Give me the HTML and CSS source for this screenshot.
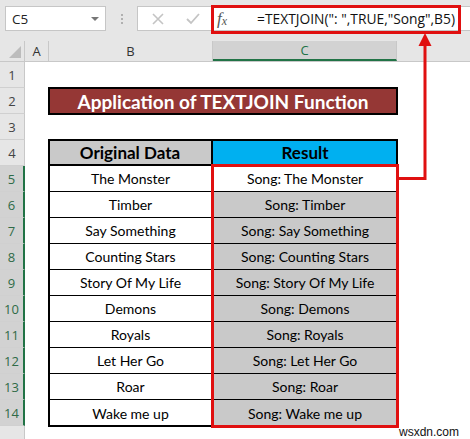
FILE: index.html
```html
<!DOCTYPE html>
<html>
<head>
<meta charset="utf-8">
<link rel="stylesheet" href="styles.css">
</head>
<body>
<div class="app">
  <div class="toolbar">
    <div class="namebox"><span class="nb-text">C5</span><span class="nb-arrow"></span></div>
    <div class="dots"><i></i><i></i><i></i></div>
    <div class="fbar">
      <span class="ficon cancel">
        <svg width="14" height="14" viewBox="0 0 14 14"><path d="M2 2 L12 12 M12 2 L2 12" stroke="#c4c4c4" stroke-width="1.6" fill="none"/></svg>
      </span>
      <span class="ficon enter">
        <svg width="16" height="14" viewBox="0 0 16 14"><path d="M2 7 L6 11 L14 2" stroke="#c4c4c4" stroke-width="1.8" fill="none"/></svg>
      </span>
      <span class="fx">f<sub>x</sub></span>
      <span class="formula">=TEXTJOIN(": ",TRUE,"Song",B5)</span>
    </div>
  </div>

  <div class="colheads">
    <div class="corner"><span class="tri"></span></div>
    <div class="ch ch-a">A</div>
    <div class="ch ch-b">B</div>
    <div class="ch ch-c sel">C</div>
    <div class="ch ch-rest"></div>
  </div>

  <div class="sheet">
    <div class="rowheads">
      <div class="rh">1</div>
      <div class="rh">2</div>
      <div class="rh">3</div>
      <div class="rh">4</div>
      <div class="rh sel">5</div>
      <div class="rh sel">6</div>
      <div class="rh sel">7</div>
      <div class="rh sel">8</div>
      <div class="rh sel">9</div>
      <div class="rh sel">10</div>
      <div class="rh sel">11</div>
      <div class="rh sel">12</div>
      <div class="rh sel">13</div>
      <div class="rh sel">14</div>
      <div class="rh"></div>
    </div>
    <div class="cells">
      <div class="blank"></div>
      <div class="titlerow"><div class="title">Application of TEXTJOIN Function</div></div>
      <div class="blank"></div>
      <div class="table">
        <div class="tr head"><div class="td b">Original Data</div><div class="td c">Result</div></div>
        <div class="tr"><div class="td b">The Monster</div><div class="td c white">Song: The Monster</div></div>
        <div class="tr"><div class="td b">Timber</div><div class="td c">Song: Timber</div></div>
        <div class="tr"><div class="td b">Say Something</div><div class="td c">Song: Say Something</div></div>
        <div class="tr"><div class="td b">Counting Stars</div><div class="td c">Song: Counting Stars</div></div>
        <div class="tr"><div class="td b">Story Of My Life</div><div class="td c">Song: Story Of My Life</div></div>
        <div class="tr"><div class="td b">Demons</div><div class="td c">Song: Demons</div></div>
        <div class="tr"><div class="td b">Royals</div><div class="td c">Song: Royals</div></div>
        <div class="tr"><div class="td b">Let Her Go</div><div class="td c">Song: Let Her Go</div></div>
        <div class="tr"><div class="td b">Roar</div><div class="td c">Song: Roar</div></div>
        <div class="tr last"><div class="td b">Wake me up</div><div class="td c">Song: Wake me up</div></div>
      </div>
    </div>
  </div>

  <div class="redbox formula-box"></div>
  <div class="redbox range-box"></div>
  <svg class="arrow" width="470" height="439" viewBox="0 0 470 439">
    <path d="M398 178.5 H425 V44" stroke="#e01010" stroke-width="3" fill="none"/>
    <path d="M418.5 46 L425 33 L431.5 46 Z" fill="#e01010"/>
  </svg>
  <div class="watermark">wsxdn.com</div>
</div>
</body>
</html>
```

FILE: styles.css
```css
* { box-sizing: border-box; }
html, body { margin: 0; padding: 0; }
body { width: 470px; height: 439px; overflow: hidden; background: #fff; }
.app { position: relative; width: 470px; height: 439px; overflow: hidden; font-family: Lato, "Liberation Sans", sans-serif; }

.toolbar { height: 41px; background: #e6e6e6; display: flex; align-items: flex-start; padding-top: 6px; }
.namebox { margin-left: 5px; width: 101px; height: 25px; background: #fff; border: 1px solid #c6c6c6; display: flex; align-items: center; justify-content: space-between; padding: 0 6px 0 6px; }
.nb-text { font-family: "Open Sans", "Liberation Sans", sans-serif; font-size: 13.5px; color: #222; }
.nb-arrow { width: 0; height: 0; border-left: 4px solid transparent; border-right: 4px solid transparent; border-top: 4px solid #777; }
.dots { width: 31px; height: 25px; display: flex; flex-direction: column; align-items: center; justify-content: center; gap: 2px; }
.dots i { display: block; width: 2px; height: 2px; background: #b0b0b0; }
.fbar { flex: 1; height: 25px; background: #fff; border: 1px solid #c6c6c6; border-right: none; display: flex; align-items: center; }
.ficon { display: flex; align-items: center; justify-content: center; }
.cancel { margin-left: 13px; }
.enter { margin-left: 20px; }
.fx { margin-left: 16px; font-family: "Liberation Serif", serif; font-style: italic; font-size: 17px; color: #555; line-height: 1; }
.fx sub { font-size: 12px; vertical-align: -1px; }
.formula { margin-left: 30px; font-family: "Open Sans", "Liberation Sans", sans-serif; font-size: 13.8px; color: #111; white-space: nowrap; }

.colheads { height: 21px; display: grid; grid-template-columns: 25px 24px 164px 184px 1fr; background: #e6e6e6; border-bottom: 1px solid #c8c8c8; }
.corner { border-right: 1px solid #c8c8c8; position: relative; }
.tri { position: absolute; right: 3px; bottom: 3px; width: 0; height: 0; border-left: 12px solid transparent; border-bottom: 12px solid #bcbcbc; }
.ch { border-right: 1px solid #c8c8c8; display: flex; align-items: center; justify-content: center; font-family: "Open Sans", "Liberation Sans", sans-serif; font-size: 13px; color: #333; }
.ch.sel { background: #d2d2d2; color: #217346; border-bottom: 2px solid #217346; }
.ch-rest { border-right: none; }

.sheet { display: grid; grid-template-columns: 25px 1fr; }
.rowheads { background: #e6e6e6; }
.rh { height: 26px; border-bottom: 1px solid #d0d0d0; border-right: 1px solid #c8c8c8; display: flex; align-items: center; justify-content: center; font-family: "Open Sans", "Liberation Sans", sans-serif; font-size: 13px; color: #444; }
.rh.sel { background: #d2d2d2; color: #2f6b47; border-right: 2px solid #217346; }

.cells { padding-left: 24px; }
.blank { height: 26px; }
.titlerow { height: 26px; width: 348px; }
.title { height: 26px; background: #953735; outline: 2px solid #000; outline-offset: -1px; color: #fff; font-weight: 700; font-size: 19px; display: flex; align-items: center; justify-content: center; }

.table { width: 348px; outline: 2px solid #000; outline-offset: -1px; }
.tr { height: 26px; display: grid; grid-template-columns: 164px 184px; border-bottom: 1px solid #000; }
.tr.last { border-bottom: none; }
.tr.head { border-bottom: 2px solid #000; }
.td { display: flex; align-items: center; justify-content: center; font-size: 14px; color: #000; white-space: nowrap; }
.td.b { border-right: 1px solid #000; background: #fff; }
.td.c { background: #c9c9c9; }
.td.c.white { background: #fff; }
.head .td { font-weight: 700; font-size: 17px; }
.head .td.b { background: #c9c9c9; border-right-width: 2px; }
.head .td.c { background: #00b0f0; }

.redbox { position: absolute; border: 3px solid #e01010; }
.formula-box { left: 211px; top: 5px; width: 250px; height: 29px; }
.range-box { left: 211px; top: 164px; width: 188px; height: 264px; }
.arrow { position: absolute; left: 0; top: 0; }
.watermark { position: absolute; left: 399px; top: 425px; font-family: "Liberation Sans", sans-serif; font-size: 12px; color: #111; text-shadow: 0 0 2px #fff, 0 0 2px #fff; }
```
